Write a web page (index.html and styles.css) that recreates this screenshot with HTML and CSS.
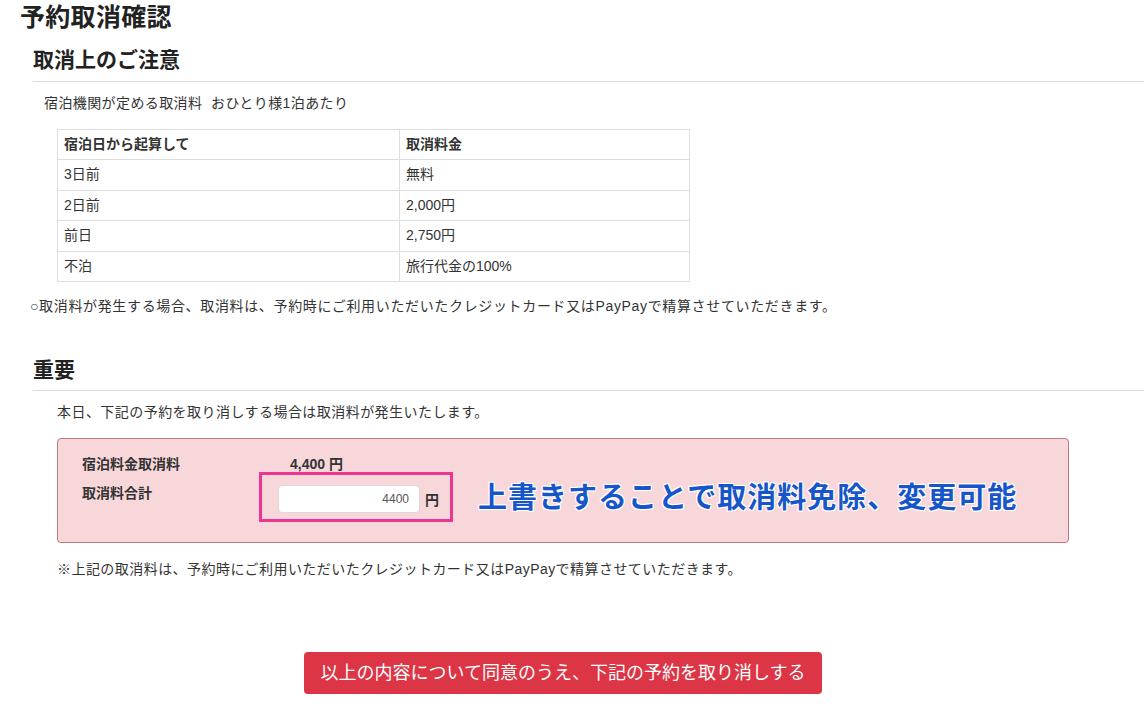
FILE: index.html
```html
<!DOCTYPE html>
<html lang="ja">
<head>
<meta charset="utf-8">
<title>予約取消確認</title>
<link rel="stylesheet" href="styles.css">
</head>
<body>
<div class="page">
  <h1 class="title">予約取消確認</h1>

  <section class="sec">
    <h2 class="sec-head">取消上のご注意</h2>
    <p class="lead">宿泊機関が定める取消料&nbsp; おひとり様1泊あたり</p>
    <table class="fee-table">
      <tr><th class="col1">宿泊日から起算して</th><th>取消料金</th></tr>
      <tr><td>3日前</td><td>無料</td></tr>
      <tr><td>2日前</td><td>2,000円</td></tr>
      <tr><td>前日</td><td>2,750円</td></tr>
      <tr><td>不泊</td><td>旅行代金の100%</td></tr>
    </table>
    <p class="note-top">○取消料が発生する場合、取消料は、予約時にご利用いただいたクレジットカード又はPayPayで精算させていただきます。</p>
  </section>

  <section class="sec sec-important">
    <h2 class="sec-head sec-head-2">重要</h2>
    <p class="notice">本日、下記の予約を取り消しする場合は取消料が発生いたします。</p>
    <div class="alert">
      <div class="fee-grid">
        <div class="fee-label">宿泊料金取消料</div>
        <div class="fee-value">4,400 円</div>
        <div class="fee-label fee-label-2">取消料合計</div>
        <div class="fee-input-cell">
          <input class="fee-input" type="text" value="4400">
          <span class="yen">円</span>
        </div>
      </div>
      <div class="highlight"></div>
      <div class="annotation">上書きすることで取消料免除、変更可能</div>
    </div>
    <p class="note-bottom">※上記の取消料は、予約時にご利用いただいたクレジットカード又はPayPayで精算させていただきます。</p>
    <div class="actions">
      <button class="btn-cancel" type="button">以上の内容について同意のうえ、下記の予約を取り消しする</button>
    </div>
  </section>
</div>
</body>
</html>
```

FILE: styles.css
```css
html, body {
  margin: 0;
  padding: 0;
  background: #fff;
}
body {
  font-family: "Liberation Sans", "Noto Sans CJK JP", sans-serif;
  color: #333;
  font-size: 14px;
}
.page {
  padding-left: 20px;
}
.title {
  margin: 2px 0 0;
  font-size: 25px;
  line-height: 30px;
  font-weight: bold;
  color: #222;
  letter-spacing: 0.3px;
}
.sec {
  margin-left: 13px;
}
.sec-head {
  margin: 13px 0 0;
  font-size: 21px;
  line-height: 30px;
  font-weight: bold;
  color: #222;
  padding-bottom: 6px;
  border-bottom: 1px solid #dcdcdc;
}
.sec-head-2 {
  margin-top: 39px;
  padding-bottom: 5px;
}
.lead {
  margin: 11px 0 0 11px;
  line-height: 20px;
  letter-spacing: 0.4px;
}
.fee-table {
  margin: 16px 0 0 24px;
  border-collapse: collapse;
  width: 633px;
}
.fee-table th,
.fee-table td {
  border: 1px solid #dedede;
  padding: 5px 6px;
  line-height: 19.4px;
  text-align: left;
  font-size: 14px;
}
.fee-table th {
  font-weight: bold;
  color: #333;
}
.col1 {
  width: 329px;
}
.note-top {
  margin: 14px 0 0 -3px;
  line-height: 20px;
  letter-spacing: 0.65px;
}
.notice {
  margin: 11px 0 0 24px;
  line-height: 20px;
  letter-spacing: 0.45px;
}
.alert {
  position: relative;
  margin: 16px 0 0 24px;
  width: 1012px;
  box-sizing: border-box;
  background: #f8d7da;
  border: 1px solid #c07880;
  border-radius: 4px;
  padding: 15px 24px 29px;
}
.fee-grid {
  display: grid;
  grid-template-columns: 196px auto;
  row-gap: 9px;
  align-items: start;
}
.fee-label {
  font-weight: bold;
  line-height: 20px;
  font-size: 14px;
  color: #333;
}
.fee-value {
  font-weight: bold;
  line-height: 20px;
  padding-left: 12px;
  color: #333;
}
.fee-input-cell {
  display: flex;
  align-items: center;
  gap: 5px;
  margin-top: 2px;
}
.fee-input {
  width: 142px;
  height: 28px;
  box-sizing: border-box;
  border: 1px solid #e2d6d7;
  border-radius: 4px;
  background: #fff;
  text-align: right;
  padding: 0 10px;
  font-family: "Liberation Sans", sans-serif;
  font-size: 12px;
  color: #555;
  margin: 0;
}
.yen {
  font-weight: bold;
  font-size: 14px;
  color: #333;
}
.highlight {
  position: absolute;
  left: 201px;
  top: 33px;
  width: 194px;
  height: 50px;
  box-sizing: border-box;
  border: 3px solid #ee3592;
}
.annotation {
  position: absolute;
  left: 420px;
  top: 41px;
  font-size: 29px;
  line-height: 36px;
  font-weight: bold;
  color: #1756c8;
  letter-spacing: 1px;
  white-space: nowrap;
  text-shadow: 1px 1px 0 #fff, -1px -1px 0 #fff, 1px -1px 0 #fff, -1px 1px 0 #fff, 0 0 2px #fff;
}
.note-bottom {
  margin: 16px 0 0 24px;
  line-height: 20px;
  letter-spacing: 0.45px;
}
.actions {
  margin: 73px 0 0 24px;
  width: 1012px;
  display: flex;
  justify-content: center;
}
.btn-cancel {
  height: 42px;
  padding: 0 16px;
  border: none;
  border-radius: 4px;
  background: #dc3545;
  color: #fff;
  font-family: "Liberation Sans", "Noto Sans CJK JP", sans-serif;
  font-size: 18px;
  line-height: 42px;
}
```
